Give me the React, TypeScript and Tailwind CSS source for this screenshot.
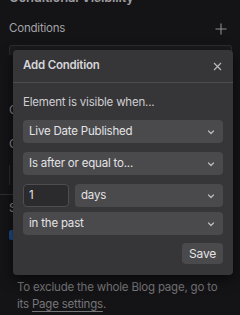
import React from "react";

const Chevron = () => (
  <svg width="10" height="10" viewBox="0 0 10 10" className="shrink-0">
    <path d="M2.5 4 L5 6.5 L7.5 4" fill="none" stroke="#bdbdbf" strokeWidth="1.2" strokeLinecap="round" strokeLinejoin="round" />
  </svg>
);

const Select = ({ label, className = "" }: { label: string; className?: string }) => (
  <div className={`h-[23px] rounded-[4px] bg-[#4a494c] flex items-center justify-between pl-[6px] pr-[7px] text-[11.5px] tracking-[-0.2px] text-[#e4e4e6] ${className}`}>
    <span>{label}</span>
    <Chevron />
  </div>
);

export default function App() {
  return (
    <div
      className="relative w-[240px] h-[315px] overflow-hidden bg-[#141316]"
      style={{ fontFamily: "Inter, 'Liberation Sans', sans-serif" }}
    >
      <div className="pl-[9px] pr-[8px]">
        <div className="-mt-[11px] h-[16px] text-[13px] font-semibold tracking-[-0.2px] text-[#9c9c9e] leading-[16px]">Conditional Visibility</div>
        <div className="mt-[16px] flex items-center justify-between h-[16px]">
          <span className="text-[11.5px] tracking-[-0.2px] text-[#a3a3a5]">Conditions</span>
          <svg width="12" height="12" viewBox="0 0 12 12" className="mr-[5px]">
            <path d="M6 0.5 V11.5 M0.5 6 H11.5" stroke="#8e8e90" strokeWidth="1.1" />
          </svg>
        </div>
        <div className="mt-[8px] h-[10px] rounded-t-[3px] border border-b-0 border-[#2c2b2e] bg-[#1b1a1d]" />
        <div className="relative h-[224px]">
          <div className="absolute left-[0px] top-[46px] text-[12px] text-[#8f8f91]">C</div>
          <div className="absolute left-[0px] top-[80px] text-[12px] text-[#8f8f91]">C</div>
          <div className="absolute left-[0px] top-[110px] w-px h-[20px] bg-[#2e2d30]" />
          <div className="absolute -left-[9px] top-[139px] w-[30px] h-px bg-[#2e2d30]" />
          <div className="absolute left-[0px] top-[144px] text-[12px] text-[#8f8f91]">S</div>
          <div className="absolute left-[0px] top-[175px] w-[10px] h-[10px] rounded-[2px] bg-[#1d4b86]" />
        </div>
        <div className="ml-[8px] whitespace-nowrap text-[11.5px] tracking-[-0.2px] leading-[17px] text-[#767678]">
          To exclude the whole Blog page, go to
          <br />
          its <span className="underline underline-offset-[3px] decoration-[#767678]">Page settings</span>.
        </div>
      </div>

      <div className="absolute left-[13px] top-[50px] w-[220px] h-[225px] rounded-[4px] bg-[#363538] shadow-[0_4px_14px_rgba(0,0,0,0.6)] flex flex-col">
        <div className="h-[33px] border-b border-[#4c4b4e] flex items-center justify-between pl-[10px] pr-[11px]">
          <span className="text-[11.5px] font-semibold tracking-[-0.2px] text-[#d6d6d8]">Add Condition</span>
          <svg width="9" height="9" viewBox="0 0 9 9">
            <path d="M1 1 L8 8 M8 1 L1 8" stroke="#bdbdbf" strokeWidth="1.1" />
          </svg>
        </div>
        <div className="px-[10px] pt-[11px] flex flex-col">
          <div className="h-[16px] text-[11.5px] tracking-[-0.2px] leading-[16px] text-[#cfcfd1]">Element is visible when...</div>
          <Select label="Live Date Published" className="mt-[10px]" />
          <Select label="Is after or equal to..." className="mt-[9px]" />
          <div className="mt-[9px] flex gap-[6px]">
            <div className="w-[46px] h-[23px] rounded-[4px] bg-[#2b2a2d] border border-[#4e4d50] flex items-center pl-[5px] text-[11.5px] text-[#e4e4e6]">1</div>
            <Select label="days" className="flex-1" />
          </div>
          <Select label="in the past" className="mt-[5px]" />
          <div className="mt-[8px] flex justify-end">
            <div className="w-[41px] h-[21px] rounded-[4px] bg-[#4a494c] flex items-center justify-center text-[12px] tracking-[-0.2px] text-[#e4e4e6]">Save</div>
          </div>
        </div>
      </div>
    </div>
  );
}
